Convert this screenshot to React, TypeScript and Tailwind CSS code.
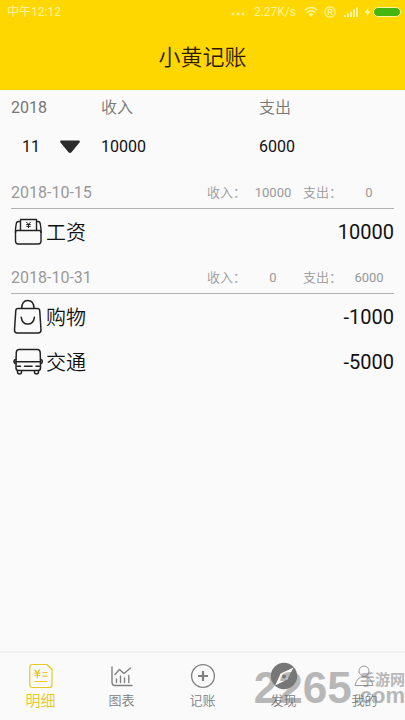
import { useState } from 'react';
import type { ReactNode } from 'react';
import clsx from 'clsx';

type IconProps = { className?: string };

type Entry = { id: number; name: string; amount: number; icon: ReactNode };
type Day = { date: string; income: number; expense: number; entries: Entry[] };

function WalletIcon({ className }: IconProps) {
  return (
    <svg className={className} viewBox="0 0 30 30" fill="none" stroke="#222" strokeWidth="1.4" strokeLinejoin="round">
      <path d="M7 4.5H5.5Q3.5 4.500 3.200 7L2.500 12V24Q2.500 27 5.300 27H25.200Q28 27 28 24V12L27.300 7Q27 4.500 25 4.500H23.500" />
      <path d="M2.500 16V14.500Q2.500 13.500 4.300 13.500H26.200Q28 13.500 28 14.500V16" />
      <path d="M7.500 13.500V2.500H23.500V13.500" />
      <path d="M13.300 5l2.200 2.300 2.200-2.300M15.500 7.300v3.700M13.300 7.500h4.400M13.300 9.300h4.400" strokeWidth="1" />
    </svg>
  );
}

function BagIcon({ className }: IconProps) {
  return (
    <svg className={className} viewBox="0 0 30 36" fill="none" stroke="#222" strokeWidth="1.5" strokeLinecap="round" strokeLinejoin="round">
      <path d="M5 9.500H24.500Q26.500 9.500 26.700 11.500L28 31Q28 34 25 34H4.200Q1.500 34 1.500 31L2.800 11.500Q3 9.500 5 9.500Z" />
      <path d="M8.800 9.300Q8.800 1.500 14.800 1.500T21 9.300" />
      <path d="M8.200 18.300Q9.200 25 14.800 25T21.400 18.300" />
    </svg>
  );
}

function BusIcon({ className }: IconProps) {
  return (
    <svg className={className} viewBox="0 0 30 28" fill="none" stroke="#222" strokeWidth="1.5" strokeLinecap="round" strokeLinejoin="round">
      <path d="M6 1.500H24.500Q27 1.500 27.200 4.500L27.500 13.500V20Q27.500 22.500 25 22.500H5.500Q3 22.500 3 20V13.500L3.300 4.500Q3.500 1.500 6 1.500Z" />
      <path d="M3 13.800H27.500M4 18.300H7.500M23 18.300H26.500M11.500 18.300H19" />
      <path d="M3 11.500Q1 11.500 1 13.500T3 15.500M27.500 11.500Q29.300 11.500 29.300 13.500T27.500 15.500" />
      <path d="M4.500 22.800V24Q4.500 26 6.500 26T8.500 24V22.800M21.500 22.800V24Q21.500 26 23.500 26T25.500 24V22.800" />
    </svg>
  );
}

function BillIcon({ className }: IconProps) {
  return (
    <svg className={className} viewBox="0 0 26 26" fill="none" stroke="currentColor" strokeWidth="1.2" strokeLinecap="round" strokeLinejoin="round">
      <path d="M4.500 1.500H19L24 6.500V22Q24 24.500 21.500 24.500H4.500Q1.800 24.500 1.800 22V4Q1.800 1.500 4.500 1.500Z" />
      <path d="M7 7l2.300 2.800L11.600 7M9.300 9.800v5M6.800 10.200h5M6.800 12.500h5M15 9.500h4M15 13.200h4M7 18.500h12" />
    </svg>
  );
}

function ChartIcon({ className }: IconProps) {
  return (
    <svg className={className} viewBox="0 0 24 24" fill="none" stroke="currentColor" strokeWidth="1.4" strokeLinecap="round" strokeLinejoin="round">
      <path d="M2 3V18Q2 21.500 5 21.500H22M5 10.500L9.500 5.500L14 9.500L20.500 4" />
      <path d="M6.500 15V18.500M10.500 12V18.500M14.500 14V18.500M18.800 11.500V18.500" />
    </svg>
  );
}

function AddIcon({ className }: IconProps) {
  return (
    <svg className={className} viewBox="0 0 26 26" fill="none" stroke="currentColor">
      <circle cx="13" cy="13" r="11.4" strokeWidth="1.3" />
      <path d="M13 8V18M8 13H18" strokeWidth="2.2" />
    </svg>
  );
}

function CompassIcon({ className }: IconProps) {
  return (
    <svg className={className} viewBox="0 0 28 28">
      <circle cx="14" cy="14" r="13.2" fill="#777" />
      <path d="M23.500 5.500L17.300 17.500L5 23.500L10.700 11.500Z" fill="#fafafa" />
      <circle cx="14" cy="14.5" r="2" fill="#777" />
    </svg>
  );
}

function PersonIcon({ className }: IconProps) {
  return (
    <svg className={className} viewBox="0 0 26 26" fill="none" stroke="#999" strokeWidth="1">
      <circle cx="12" cy="8" r="5" />
      <path d="M3 22.500Q5 13.500 12 13.500T21 22.500Z" />
    </svg>
  );
}

const days: Day[] = [
  {
    date: '2018-10-15',
    income: 10000,
    expense: 0,
    entries: [{ id: 1, name: '工资', amount: 10000, icon: <WalletIcon className="h-[30px] w-[30px]" /> }],
  },
  {
    date: '2018-10-31',
    income: 0,
    expense: 6000,
    entries: [
      { id: 2, name: '购物', amount: -1000, icon: <BagIcon className="h-9 w-[30px]" /> },
      { id: 3, name: '交通', amount: -5000, icon: <BusIcon className="h-7 w-[30px]" /> },
    ],
  },
];

const tabs: { key: string; label: string; icon: ReactNode }[] = [
  { key: 'detail', label: '明细', icon: <BillIcon className="h-[26px] w-[26px]" /> },
  { key: 'chart', label: '图表', icon: <ChartIcon className="h-6 w-6" /> },
  { key: 'add', label: '记账', icon: <AddIcon className="h-[26px] w-[26px]" /> },
  { key: 'find', label: '发现', icon: <CompassIcon className="h-7 w-7" /> },
  { key: 'mine', label: '我的', icon: <PersonIcon className="h-[26px] w-[26px]" /> },
];

function StatusBar() {
  return (
    <div className="flex h-6 items-center justify-between pr-1 pl-[7px] text-[12px] text-[#fff59a]">
      <span>中午12:12</span>
      <div className="flex items-center">
        <svg className="mr-2 h-3 w-4" viewBox="0 0 16 12" fill="currentColor">
          <circle cx="3" cy="8" r="1.4" />
          <circle cx="8" cy="8" r="1.4" />
          <circle cx="13" cy="8" r="1.4" />
        </svg>
        <span className="mr-2">2.27K/s</span>
        <svg className="mr-[6px] h-3 w-[14px]" viewBox="0 0 14 12" fill="none" stroke="currentColor" strokeWidth="1.5">
          <path d="M.7 4.200Q7-1.200 13.300 4.200M2.800 6.600Q7 3 11.200 6.600" />
          <path d="M4.500 8.300Q7 6.300 9.500 8.300L7 11Z" fill="currentColor" stroke="none" />
        </svg>
        <svg className="mr-2 h-3 w-3" viewBox="0 0 12 12" fill="none" stroke="currentColor" strokeWidth="1.2">
          <circle cx="6" cy="6" r="5.2" />
          <path d="M4.300 9V3.300H6.500Q8 3.300 8 4.700T6.500 6.100H4.300M6.300 6.100L8 8.800" />
        </svg>
        <svg className="mr-[6px] h-3 w-[14px]" viewBox="0 0 14 12" fill="currentColor">
          <path d="M0 9h2v2H0zM3 7.500h2V11H3zM6 5.500h2V11H6zM9 3.500h2V11H9zM12 1.500h2V11h-2z" />
        </svg>
        <svg className="h-3 w-[7px]" viewBox="0 0 7 12" fill="currentColor">
          <path d="M4.500 1L.5 7H3L2.200 11L6.500 5H4Z" />
        </svg>
        <div className="ml-[2px] h-[10px] w-7 rounded-full border border-[#fff59a] bg-[#45b510]" />
      </div>
    </div>
  );
}

function DaySection({ day }: { day: Day }) {
  return (
    <section>
      <header className="flex h-10 items-center border-b border-[#b0b0b0] pt-2 text-[#999]">
        <h2 className="flex-1 text-[16px]">{day.date}</h2>
        <dl className="grid grid-cols-[41px_50px_46px_50px] text-[13px]">
          <dt className="font-[350]">收入：</dt>
          <dd className="text-center">{day.income}</dd>
          <dt className="pl-[5px] font-[350]">支出：</dt>
          <dd className="text-center">{day.expense}</dd>
        </dl>
      </header>
      <ul>
        {day.entries.map(entry => (
          <li key={entry.id} className="flex h-[45px] items-center pt-px text-[20px] text-[#111]">
            <span className="flex w-[35px] pl-[2px]">{entry.icon}</span>
            <span className="flex-1 pt-px font-[350]">{entry.name}</span>
            <span>{entry.amount}</span>
          </li>
        ))}
      </ul>
    </section>
  );
}

export default function App() {
  const [month, setMonth] = useState('11');
  const [tab, setTab] = useState('detail');

  return (
    <div className="flex min-h-screen flex-col bg-[#fafafa] font-['Roboto','Noto_Sans_CJK_SC',sans-serif]">
      <header className="bg-[#ffd700]">
        <StatusBar />
        <h1 className="flex h-[66px] items-center justify-center text-[22px] font-[350] text-[#2b1a00]">小黄记账</h1>
      </header>

      <main className="flex-1 px-[11px]">
        {/* Month totals */}
        <div className="grid h-[79px] grid-cols-[90px_158px_1fr] grid-rows-[35px_44px] items-center text-[16px] text-[#111]">
          <label htmlFor="month" className="text-[#777]">2018</label>
          <span className="font-[350] text-[#777]">收入</span>
          <span className="font-[350] text-[#777]">支出</span>
          <div className="relative w-[74px]">
            <select
              id="month"
              value={month}
              onChange={e => setMonth(e.target.value)}
              className="w-full appearance-none bg-transparent pl-[11px]"
            >
              {['1', '2', '3', '4', '5', '6', '7', '8', '9', '10', '11', '12'].map(m => (
                <option key={m} value={m}>{m}</option>
              ))}
            </select>
            <svg className="pointer-events-none absolute top-1/2 right-1 h-[14px] w-[22px] -translate-y-1/2" viewBox="0 0 22 14" fill="#2b2b2b">
              <path d="M2.500 .5H19.500Q22 .8 20.300 2.800L12.500 12.300Q11 13.800 9.500 12.300L1.700 2.800Q0 .8 2.500 .5Z" />
            </svg>
          </div>
          <span>10000</span>
          <span>6000</span>
        </div>

        {days.map(day => (
          <DaySection key={day.date} day={day} />
        ))}
      </main>

      <nav className="relative grid h-[69px] grid-cols-5 border-t-2 border-[#f0f0f0]">
        {tabs.map(t => (
          <button
            key={t.key}
            onClick={() => setTab(t.key)}
            className={clsx(
              'flex flex-col items-center pt-[9px] font-[350]',
              tab === t.key ? 'text-[15px] text-[#e6c81e]' : 'text-[13px] text-[#808080]'
            )}
          >
            <span className="flex h-7 items-center">{t.icon}</span>
            <span className="leading-[22px]">{t.label}</span>
          </button>
        ))}

        {/* Watermark */}
        <div className="pointer-events-none absolute right-0 bottom-3 flex items-center gap-[2px] font-['Liberation_Sans','Noto_Sans_CJK_SC',sans-serif] font-bold text-[#777] opacity-50">
          <span className="text-[44px] leading-10">2265</span>
          <span className="flex flex-col items-end">
            <span className="text-[15px] leading-4">手游网</span>
            <span className="text-[22px] leading-4">.com</span>
          </span>
        </div>
      </nav>
    </div>
  );
}
